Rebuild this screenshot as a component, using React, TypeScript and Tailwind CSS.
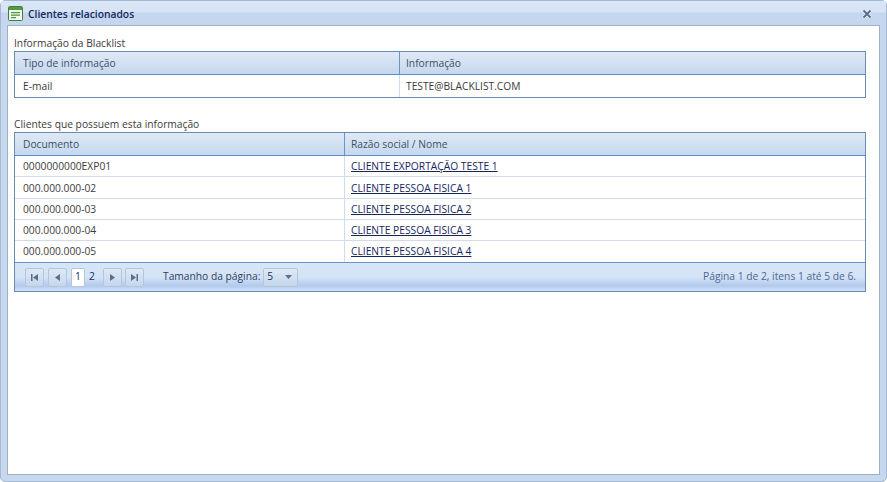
import React from "react";

const font = { fontFamily: '"Open Sans", "Noto Sans", sans-serif' };

function PagerButton({ d }: { d: React.ReactNode }) {
  return (
    <div className="flex h-[19px] w-[19px] shrink-0 items-center justify-center rounded-[2px] border border-[#b4c6dc] bg-gradient-to-b from-[#dfe9f6] to-[#c5d6ec]">
      <svg width="9" height="9" viewBox="0 0 9 9" fill="#5a6f8c">{d}</svg>
    </div>
  );
}

const rows = [
  ["0000000000EXP01", "CLIENTE EXPORTAÇÃO TESTE 1", "h-[21px] border-b", "pt-[2px]"],
  ["000.000.000-02", "CLIENTE PESSOA FISICA 1", "h-[22px] border-b", "pt-[2px]"],
  ["000.000.000-03", "CLIENTE PESSOA FISICA 2", "h-[21px] border-b", "pt-[2px]"],
  ["000.000.000-04", "CLIENTE PESSOA FISICA 3", "h-[21px] border-b", "pt-[2px]"],
  ["000.000.000-05", "CLIENTE PESSOA FISICA 4", "h-[21px]", ""],
];

function HeaderCell({ children, className }: { children: React.ReactNode; className: string }) {
  return (
    <div className={`flex h-full items-center pt-[1px] ${className}`}>{children}</div>
  );
}

export default function App() {
  return (
    <div style={font} className="h-[482px] w-[887px] overflow-hidden bg-white text-[10.25px] text-[#3b3b3b]">
      <div className="flex h-[482px] flex-col rounded-[5px] border border-[#a5b9d3] bg-[#c6d8ee] px-[6px] pb-[6px]">
        <div className="-mx-[6px] flex h-[24px] shrink-0 items-center bg-[linear-gradient(#d9e6f6_0px,#d6e4f5_11px,#c4d7ee_12px,#c4d7ee_100%)] pl-[7px] pr-[14px] pt-[1px]">
          <svg width="15" height="15" viewBox="0 0 15 15" className="shrink-0">
            <rect x="0.5" y="0.5" width="14" height="14" rx="1" fill="#f4f8ee" stroke="#3f7d3a" />
            <rect x="1" y="1" width="13" height="3" fill="#4f9a45" />
            <rect x="3" y="6" width="9" height="1.3" fill="#4f9a45" />
            <rect x="3" y="8.5" width="9" height="1.3" fill="#4f9a45" />
            <rect x="3" y="11" width="5" height="1.3" fill="#4f9a45" />
          </svg>
          <span className="ml-[5px] pt-[2px] text-[10.3px] font-semibold text-[#15295e]">Clientes relacionados</span>
          <svg width="10" height="10" viewBox="0 0 10 10" className="ml-auto mt-[1px]">
            <path d="M1.5 1.5L8.5 8.5M8.5 1.5L1.5 8.5" stroke="#eef4fb" strokeWidth="3.2" />
            <path d="M1.5 1.5L8.5 8.5M8.5 1.5L1.5 8.5" stroke="#5b6b80" strokeWidth="1.8" />
          </svg>
        </div>
        <div className="flex min-h-0 flex-1 flex-col border border-[#9fb1c6] bg-white pl-[6px] pr-[13px]">
          <div className="flex h-[25px] shrink-0 items-end pb-[1px] leading-[14px]">Informação da Blacklist</div>
          <div className="flex h-[47px] shrink-0 flex-col border border-[#6a8bb0]">
            <div className="flex h-[23px] shrink-0 items-center border-b border-[#5f8ec8] bg-gradient-to-b from-[#e0e9f6] to-[#c5d8ef] text-[#3f4f66]">
              <HeaderCell className="w-[385px] border-r border-[#6a93c6] pl-2">Tipo de informação</HeaderCell>
              <HeaderCell className="flex-1 pl-[6px]">Informação</HeaderCell>
            </div>
            <div className="flex flex-1 items-center">
              <div className="flex h-full w-[385px] items-center border-r border-[#d0dce9] pl-2 pt-[1px]">E-mail</div>
              <div className="flex-1 pl-[6px] pt-[1px]">TESTE@BLACKLIST.COM</div>
            </div>
          </div>
          <div className="flex h-[34px] shrink-0 items-end pb-[1px] leading-[14px]">Clientes que possuem esta informação</div>
          <div className="flex h-[160px] shrink-0 flex-col border border-[#6a8bb0]">
            <div className="flex h-[23px] shrink-0 items-center border-b border-[#5f8ec8] bg-gradient-to-b from-[#e0e9f6] to-[#c5d8ef] text-[#3f4f66]">
              <HeaderCell className="w-[330px] border-r border-[#6a93c6] pl-2">Documento</HeaderCell>
              <HeaderCell className="flex-1 pl-[6px]">Razão social / Nome</HeaderCell>
            </div>
            {rows.map(([doc, name, cls, pad]) => (
              <div key={doc} className={`flex shrink-0 border-[#d0dce9] ${cls}`}>
                <div className={`flex w-[330px] items-center border-r border-[#d0dce9] pl-2 ${pad}`}>{doc}</div>
                <div className={`flex flex-1 items-center pl-[6px] ${pad}`}>
                  <a className="text-[#16265c] underline">{name}</a>
                </div>
              </div>
            ))}
            <div className="flex min-h-0 flex-1 items-center border-t border-[#6a93c6] bg-[linear-gradient(#d7e5f8_0%,#d5e3f7_50%,#b2caec_82%,#d3e2f6_100%)] pl-[10px] pr-[9px]">
              <PagerButton d={<path d="M1 1h1.5v7H1zM8 1v7L3 4.5z" />} />
              <div className="ml-[4px]"><PagerButton d={<path d="M7 1v7L2 4.5z" />} /></div>
              <div className="ml-[4px] flex h-[19px] w-[14px] shrink-0 items-center justify-center rounded-[2px] border border-[#b4c6dc] bg-white text-[#15315e]">1</div>
              <div className="flex w-[18px] shrink-0 justify-start pl-[4px] text-[#15315e]">2</div>
              <PagerButton d={<path d="M2 1v7l5-3.5z" />} />
              <div className="ml-[3px]"><PagerButton d={<path d="M1 1v7l5-3.5zM6.5 1H8v7H6.5z" />} /></div>
              <span className="ml-[19px] text-[#2d3f5f]">Tamanho da página:</span>
              <div className="ml-[3px] flex h-[19px] w-[35px] items-center justify-between rounded-[2px] border border-[#b4c6dc] bg-gradient-to-b from-[#dfe9f6] to-[#c5d6ec] pl-[3px] pr-[5px] text-[#15315e]">
                <span>5</span>
                <svg width="7" height="4" viewBox="0 0 7 4" fill="#5a6f8c"><path d="M0 0h7L3.5 4z" /></svg>
              </div>
              <span className="ml-auto text-[#4a688f]">Página 1 de 2, itens 1 até 5 de 6.</span>
            </div>
          </div>
        </div>
      </div>
    </div>
  );
}
